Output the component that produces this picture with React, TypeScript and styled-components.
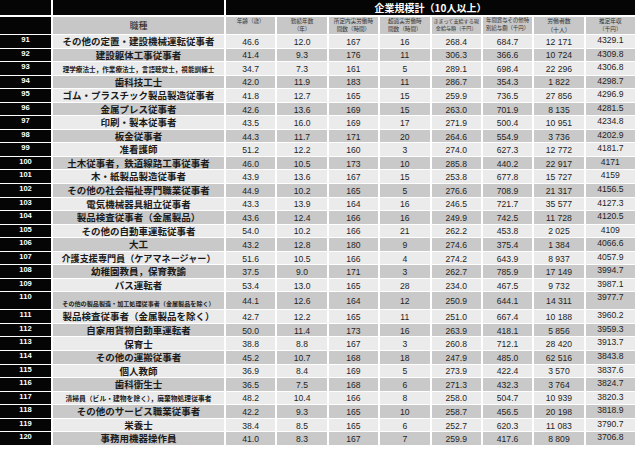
import React from "react";
import styled, { createGlobalStyle } from "styled-components";

const GlobalStyle = createGlobalStyle`
  html, body {
    margin: 0;
    padding: 0;
    background: #ffffff;
  }
  body {
    font-family: "Liberation Sans", "Noto Sans CJK JP", sans-serif;
  }
`;

type Row = {
  no: number;
  job: string;
  size?: number; // 職種の文字サイズ
  tall?: boolean;
  v: string[];
};

const rows: Row[] = [
  { no: 91, job: "その他の定置・建設機械運転従事者", v: ["46.6", "12.0", "167", "16", "268.4", "684.7", "12 171", "4329.1"] },
  { no: 92, job: "建設躯体工事従事者", v: ["41.4", "9.3", "176", "11", "306.3", "366.6", "10 724", "4309.8"] },
  { no: 93, job: "理学療法士，作業療法士，言語聴覚士，視能訓練士", size: 6.6, v: ["34.7", "7.3", "161", "5", "289.1", "698.4", "22 296", "4306.8"] },
  { no: 94, job: "歯科技工士", v: ["42.0", "11.9", "183", "11", "286.7", "354.3", "1 822", "4298.7"] },
  { no: 95, job: "ゴム・プラスチック製品製造従事者", v: ["41.8", "12.7", "165", "15", "259.9", "736.5", "27 856", "4296.9"] },
  { no: 96, job: "金属プレス従事者", v: ["42.6", "13.6", "169", "15", "263.0", "701.9", "8 135", "4281.5"] },
  { no: 97, job: "印刷・製本従事者", v: ["43.5", "16.0", "169", "17", "271.9", "500.4", "10 951", "4234.8"] },
  { no: 98, job: "板金従事者", v: ["44.3", "11.7", "171", "20", "264.6", "554.9", "3 736", "4202.9"] },
  { no: 99, job: "准看護師", v: ["51.2", "12.2", "160", "3", "274.0", "627.3", "12 772", "4181.7"] },
  { no: 100, job: "土木従事者，鉄道線路工事従事者", v: ["46.0", "10.5", "173", "10", "285.8", "440.2", "22 917", "4171"] },
  { no: 101, job: "木・紙製品製造従事者", v: ["43.9", "13.6", "167", "15", "253.8", "677.8", "15 727", "4159"] },
  { no: 102, job: "その他の社会福祉専門職業従事者", v: ["44.9", "10.2", "165", "5", "276.6", "708.9", "21 317", "4156.5"] },
  { no: 103, job: "電気機械器具組立従事者", v: ["43.3", "13.9", "164", "16", "246.5", "721.7", "35 577", "4127.3"] },
  { no: 104, job: "製品検査従事者（金属製品）", v: ["43.6", "12.4", "166", "16", "249.9", "742.5", "11 728", "4120.5"] },
  { no: 105, job: "その他の自動車運転従事者", v: ["54.0", "10.2", "166", "21", "262.2", "453.8", "2 025", "4109"] },
  { no: 106, job: "大工", v: ["43.2", "12.8", "180", "9", "274.6", "375.4", "1 384", "4066.6"] },
  { no: 107, job: "介護支援専門員（ケアマネージャー）", size: 9.1, v: ["51.6", "10.5", "166", "4", "274.2", "643.9", "8 937", "4057.9"] },
  { no: 108, job: "幼稚園教員，保育教諭", v: ["37.5", "9.0", "171", "3", "262.7", "785.9", "17 149", "3994.7"] },
  { no: 109, job: "バス運転者", v: ["53.4", "13.0", "165", "28", "234.0", "467.5", "9 732", "3987.1"] },
  { no: 110, job: "その他の製品製造・加工処理従事者（金属製品を除く）", size: 6.1, tall: true, v: ["44.1", "12.6", "164", "12", "250.9", "644.1", "14 311", "3977.7"] },
  { no: 111, job: "製品検査従事者（金属製品を除く）", v: ["42.7", "12.2", "165", "11", "251.0", "667.4", "10 188", "3960.2"] },
  { no: 112, job: "自家用貨物自動車運転者", v: ["50.0", "11.4", "173", "16", "263.9", "418.1", "5 856", "3959.3"] },
  { no: 113, job: "保育士", v: ["38.8", "8.8", "167", "3", "260.8", "712.1", "28 420", "3913.7"] },
  { no: 114, job: "その他の運搬従事者", v: ["45.2", "10.7", "168", "18", "247.9", "485.0", "62 516", "3843.8"] },
  { no: 115, job: "個人教師", v: ["36.9", "8.4", "169", "5", "273.9", "422.4", "3 570", "3837.6"] },
  { no: 116, job: "歯科衛生士", v: ["36.5", "7.5", "168", "6", "271.3", "432.3", "3 764", "3824.7"] },
  { no: 117, job: "清掃員（ビル・建物を除く），廃棄物処理従事者", size: 6.8, v: ["48.2", "10.4", "166", "8", "258.0", "504.7", "10 939", "3820.3"] },
  { no: 118, job: "その他のサービス職業従事者", v: ["42.2", "9.3", "165", "10", "258.7", "456.5", "20 198", "3818.9"] },
  { no: 119, job: "栄養士", v: ["38.4", "8.5", "165", "6", "252.7", "620.3", "11 083", "3790.7"] },
  { no: 120, job: "事務用機器操作員", v: ["41.0", "8.3", "167", "7", "259.9", "417.6", "8 809", "3706.8"] },
];

const headers: { lines: string[]; size?: number }[] = [
  { lines: ["年齢（歳）"] },
  { lines: ["勤続年数", "（年）"] },
  { lines: ["所定内実労働時", "間数（時間）"] },
  { lines: ["超過実労働時", "間数（時間）"] },
  { lines: ["きまって支給する現", "金給与額（千円）"], size: 5.1 },
  { lines: ["年間賞与その他特", "別給与額（千円）"], size: 5.4 },
  { lines: ["労働者数", "（十人）"], size: 5.9 },
  { lines: ["推定年収", "（千円）"] },
];

const Table = styled.div`
  width: 635px;
  display: grid;
  grid-template-columns: 51px 171px repeat(8, 1fr);
  column-gap: 2px;
  row-gap: 1px;
`;

const TopCell = styled.div<{ $span?: number }>`
  grid-column: span ${(p) => p.$span ?? 1};
  height: 15px;
  margin-bottom: 1px;
  background: #050505;
  color: #ffffff;
  font-family: "Noto Sans CJK JP", sans-serif;
  font-weight: 700;
  font-size: 10px;
  line-height: 15px;
  text-align: center;
  overflow: hidden;
`;

const HeadCell = styled.div<{ $dark?: boolean }>`
  height: 17px;
  background: ${(p) => (p.$dark ? "#050505" : "#c7c7c7")};
  display: flex;
  flex-direction: column;
  align-items: center;
  justify-content: flex-start;
  overflow: hidden;
`;

const HeadJob = styled(HeadCell)`
  justify-content: center;
  font-family: "Noto Sans CJK JP", sans-serif;
  font-size: 9px;
  color: #222;
  line-height: 14px;
`;

const HeadLine = styled.span<{ $size?: number }>`
  font-family: "Noto Sans CJK JP", sans-serif;
  font-size: ${(p) => p.$size ?? 5.6}px;
  line-height: 1.45;
  color: #333;
  white-space: nowrap;
`;

const NoCell = styled.div<{ $tall?: boolean }>`
  height: ${(p) => (p.$tall ? 17 : 12.55)}px;
  background: #050505;
  color: #ffffff;
  font-weight: 700;
  font-size: 7.6px;
  line-height: 10px;
  text-align: center;
`;

const JobCell = styled.div<{ $alt: boolean; $size?: number; $tall?: boolean }>`
  height: ${(p) => (p.$tall ? 17 : 12.55)}px;
  background: ${(p) => (p.$alt ? "#c9c9c9" : "#ebebeb")};
  display: flex;
  align-items: ${(p) => (p.$tall ? "flex-end" : "center")};
  justify-content: center;
  font-family: "Noto Sans CJK JP", sans-serif;
  font-weight: 700;
  font-size: ${(p) => p.$size ?? 9.5}px;
  line-height: 1;
  color: #1a1a1a;
  white-space: nowrap;
  overflow: hidden;
  padding-bottom: ${(p) => (p.$tall ? 2 : 0)}px;
  padding-top: ${(p) => (p.$tall ? 0 : 1)}px;
  box-sizing: border-box;
`;

const ValCell = styled.div<{ $alt: boolean; $tall?: boolean; $raised?: boolean }>`
  height: ${(p) => (p.$tall ? 17 : 12.55)}px;
  background: ${(p) => (p.$alt ? "#c9c9c9" : "#ebebeb")};
  display: flex;
  align-items: ${(p) => (p.$raised ? "flex-start" : "center")};
  justify-content: center;
  font-size: 8.6px;
  color: #1f1f1f;
  line-height: 10px;
  padding-top: ${(p) => (p.$raised ? 0 : 1)}px;
  box-sizing: border-box;
`;

export default function App() {
  return (
    <>
      <GlobalStyle />
      <Table>
        <TopCell />
        <TopCell />
        <TopCell $span={8}>企業規模計（10人以上）</TopCell>

        <HeadCell $dark />
        <HeadJob>職種</HeadJob>
        {headers.map((h, i) => (
          <HeadCell key={i}>
            {h.lines.map((l, j) => (
              <HeadLine key={j} $size={h.size}>
                {l}
              </HeadLine>
            ))}
          </HeadCell>
        ))}

        {rows.map((r) => {
          const alt = r.no % 2 === 0;
          return (
            <React.Fragment key={r.no}>
              <NoCell $tall={r.tall}>{r.no}</NoCell>
              <JobCell $alt={alt} $size={r.size} $tall={r.tall}>
                {r.job}
              </JobCell>
              {r.v.map((val, i) => (
                <ValCell key={i} $alt={alt} $tall={r.tall} $raised={i === 7}>
                  {val}
                </ValCell>
              ))}
            </React.Fragment>
          );
        })}
      </Table>
    </>
  );
}
